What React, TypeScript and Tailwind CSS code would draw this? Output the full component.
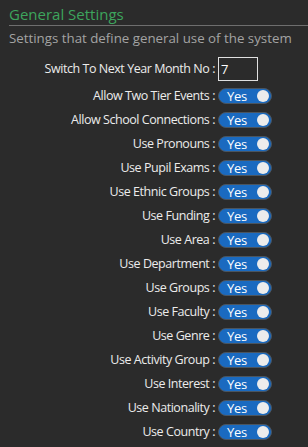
import React from 'react';

const settings = [
  'Allow Two Tier Events',
  'Allow School Connections',
  'Use Pronouns',
  'Use Pupil Exams',
  'Use Ethnic Groups',
  'Use Funding',
  'Use Area',
  'Use Department',
  'Use Groups',
  'Use Faculty',
  'Use Genre',
  'Use Activity Group',
  'Use Interest',
  'Use Nationality',
  'Use Country',
];

function Toggle() {
  return (
    <div className="flex items-center justify-between w-[54px] h-[16px] rounded-full bg-[#1a6ac0] border border-[#4a5560] pl-[8px] pr-[2px]">
      <span className="text-[13px] leading-none text-white tracking-[-0.3px]">Yes</span>
      <span className="w-[12px] h-[12px] rounded-full bg-[#ececec]" />
    </div>
  );
}

export default function App() {
  return (
    <div className="w-[308px] h-[447px] bg-[#2b2b2b] overflow-hidden" style={{ fontFamily: '"Open Sans", "Noto Sans", sans-serif' }}>
      <div className="pl-[9px] pt-[3px]">
        <h1 className="text-[15px] leading-[22px] text-[#3da55d] border-b border-[#6e6e6e]">General Settings</h1>
        <p className="text-[13.3px] leading-[22px] text-[#a3a3a3] mt-[1px]">Settings that define general use of the system</p>
      </div>

      <div className="grid grid-cols-[216px_auto] gap-x-[2px] mt-[8px] items-center">
        <label className="text-right text-[12.5px] tracking-[-0.45px] text-[#ececec] pr-[1px]">Switch To Next Year Month No :</label>
        <div className="w-[40px] h-[24px] border border-[#e0e0e0] text-[13px] text-white pl-[2px] leading-[22px]">7</div>
      </div>

      <div className="grid grid-cols-[216px_auto] gap-x-[2px] mt-[3px] items-center auto-rows-[24px]">
        {settings.map(s => (
          <React.Fragment key={s}>
            <label className="text-right text-[12.5px] tracking-[-0.45px] text-[#ececec] pr-[1px]">{s} :</label>
            <Toggle />
          </React.Fragment>
        ))}
      </div>
    </div>
  );
}
